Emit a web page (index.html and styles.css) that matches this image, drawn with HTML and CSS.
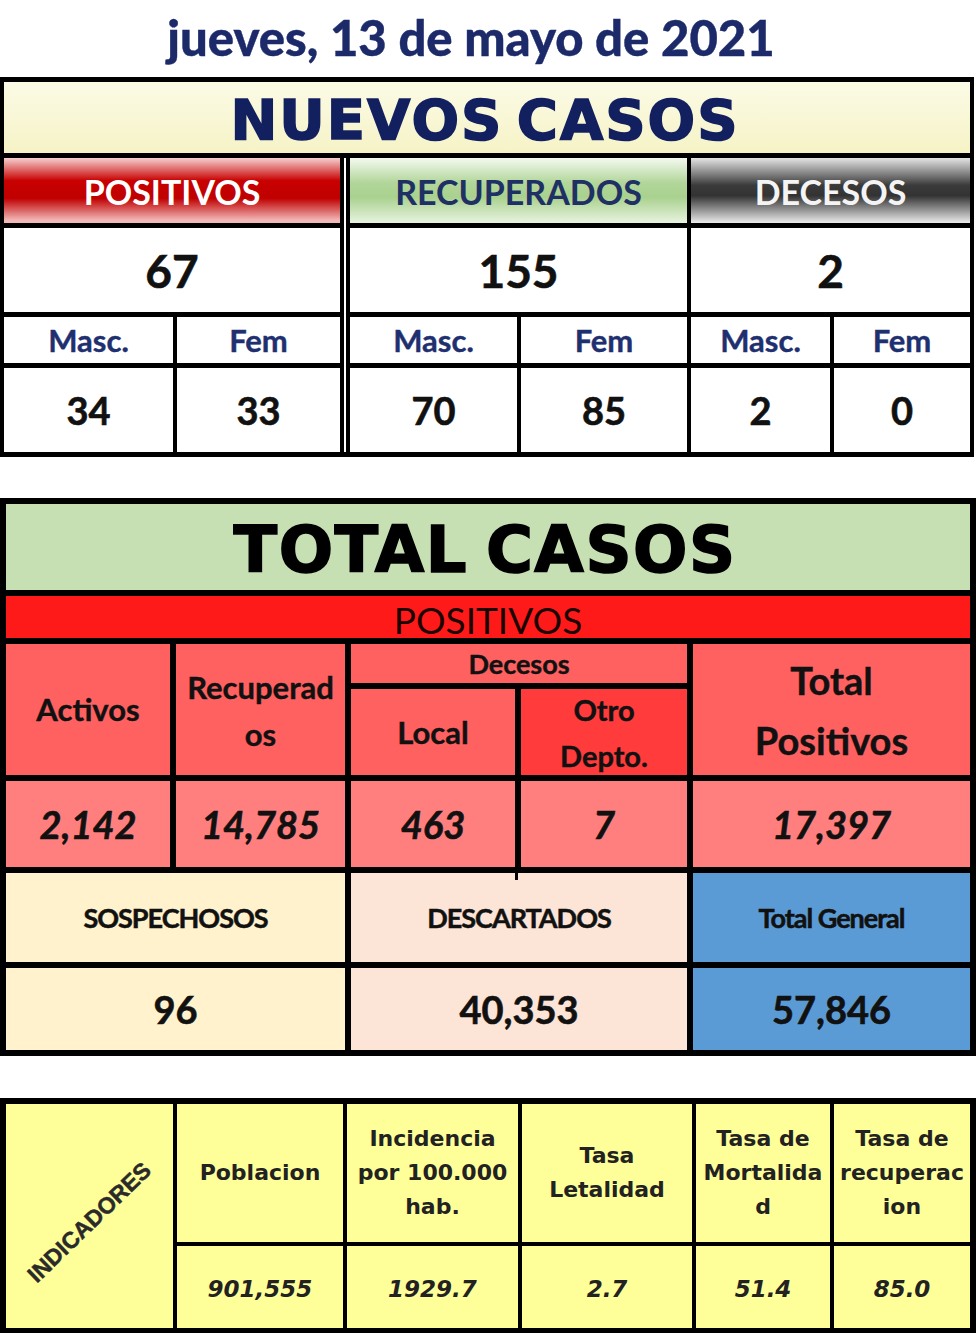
FILE: index.html
```html
<!DOCTYPE html>
<html lang="es">
<head>
<meta charset="utf-8">
<title>Reporte diario COVID-19</title>
<link rel="stylesheet" href="styles.css">
</head>
<body>
<h1 class="fecha">jueves, 13 de mayo de 2021</h1>

<section class="nuevos">
  <div class="n-title">NUEVOS CASOS</div>
  <div class="n-head pos">POSITIVOS</div>
  <div class="sep"></div>
  <div class="n-head rec">RECUPERADOS</div>
  <div class="n-head dec">DECESOS</div>
  <div class="n-big">67</div>
  <div class="n-big">155</div>
  <div class="n-big">2</div>
  <div class="n-sub">Masc.</div>
  <div class="n-sub">Fem</div>
  <div class="n-sub">Masc.</div>
  <div class="n-sub">Fem</div>
  <div class="n-sub">Masc.</div>
  <div class="n-sub">Fem</div>
  <div class="n-val">34</div>
  <div class="n-val">33</div>
  <div class="n-val">70</div>
  <div class="n-val">85</div>
  <div class="n-val">2</div>
  <div class="n-val">0</div>
</section>

<section class="total">
  <div class="t-title">TOTAL CASOS</div>
  <div class="t-band">POSITIVOS</div>
  <div class="t-h t-activos">Activos</div>
  <div class="t-h t-recup">Recuperad<br>os</div>
  <div class="t-h t-dec">Decesos</div>
  <div class="t-h t-local">Local</div>
  <div class="t-h t-otro">Otro<br>Depto.</div>
  <div class="t-h t-tot">Total<br>Positivos</div>
  <div class="t-v">2,142</div>
  <div class="t-v">14,785</div>
  <div class="t-v">463</div>
  <div class="t-v">7</div>
  <div class="t-v">17,397</div>
  <div class="t-s sosp">SOSPECHOSOS</div>
  <div class="t-s desc">DESCARTADOS</div>
  <div class="t-s gen">Total General</div>
  <div class="t-n sosp">96</div>
  <div class="t-n desc">40,353</div>
  <div class="t-n gen">57,846</div>
</section>

<section class="ind">
  <div class="i-label"><span>INDICADORES</span></div>
  <div class="i-h">Poblacion</div>
  <div class="i-h">Incidencia<br>por 100.000<br>hab.</div>
  <div class="i-h">Tasa<br>Letalidad</div>
  <div class="i-h">Tasa de<br>Mortalida<br>d</div>
  <div class="i-h">Tasa de<br>recuperac<br>ion</div>
  <div class="i-v">901,555</div>
  <div class="i-v">1929.7</div>
  <div class="i-v">2.7</div>
  <div class="i-v">51.4</div>
  <div class="i-v">85.0</div>
</section>
</body>
</html>
```

FILE: styles.css
```css
* { box-sizing: border-box; margin: 0; padding: 0; }
html, body { background: #fff; }
body {
  width: 980px;
  height: 1333px;
  overflow: hidden;
  font-family: Lato, "Noto Sans", sans-serif;
  color: #111;
}

.fecha {
  height: 77px;
  display: flex;
  align-items: center;
  justify-content: center;
  padding: 0 38px 2px 0;
  font: 900 49px/1 Lato, sans-serif;
  color: #1c2a6a;
  -webkit-text-stroke: 0.4px #1c2a6a;
}

/* ---------- NUEVOS CASOS ---------- */
.nuevos {
  display: grid;
  width: fit-content;
  background: #000;
  padding: 5px 4px;
  column-gap: 4px;
  row-gap: 5px;
  grid-template-columns: 169px 163px 2px 167px 166px 139px 136px;
  grid-template-rows: 71px 65px 84px 46px 84px;
}
.nuevos > div {
  display: flex;
  align-items: center;
  justify-content: center;
  background: #fff;
  font-weight: 700;
}
.nuevos .n-title {
  grid-column: 1 / -1;
  background: linear-gradient(#fbfbe6, #f6f3c6);
  font: 700 56px/1 "DejaVu Sans", sans-serif;
  letter-spacing: 2px;
  word-spacing: -8px;
  color: #13205f;
  -webkit-text-stroke: 1.6px #13205f;
  padding: 4px 4px 0 0;
}
.nuevos .sep { grid-column: 3; grid-row: 2 / 6; }
.nuevos .n-head { grid-column: span 2; font-size: 34px; padding-top: 2px; }
.nuevos .pos {
  background: linear-gradient(#f6d0d0 0%, #c80000 35%, #c00000 62%, #f2b8b8 96%);
  color: #fff;
}
.nuevos .rec {
  background: linear-gradient(#f4f9f0 0%, #b2d69a 38%, #a9d18e 60%, #e8f3e0 100%);
  color: #1f3064;
}
.nuevos .dec {
  background: linear-gradient(#e4e4e4 0%, #3a3a3a 42%, #333 58%, #ececec 100%);
  color: #f4f4f4;
}
.nuevos .n-big { grid-column: span 2; font-size: 46px; -webkit-text-stroke: 0.6px #111; }
.nuevos .n-sub { font-size: 31px; color: #1f3070; -webkit-text-stroke: 0.4px #1f3070; }
.nuevos .n-val { font-size: 38px; -webkit-text-stroke: 0.6px #111; }

/* ---------- TOTAL CASOS ---------- */
.total {
  display: grid;
  width: fit-content;
  margin-top: 41px;
  background: #000;
  padding: 6px;
  gap: 6px;
  grid-template-columns: 164px 169px 164px 166px 277px;
  grid-template-rows: 86px 42px 39px 86px 86px 89px 82px;
}
.total > div {
  display: flex;
  align-items: center;
  justify-content: center;
  text-align: center;
  font-weight: 700;
}
.total .t-title {
  grid-column: 1 / -1;
  background: #c6e0b4;
  font: 700 64px/1 "DejaVu Sans", sans-serif;
  letter-spacing: 1.5px;
  word-spacing: -6px;
  color: #000;
  -webkit-text-stroke: 1.6px #000;
  padding: 6px 6px 0 0;
}
.total .t-band {
  grid-column: 1 / -1;
  background: #ff1a1a;
  font-weight: 400;
  font-size: 37px;
  color: #1a0000;
  padding-top: 5px;
}
.total .t-h { background: #ff6060; line-height: 47px; font-size: 31px; -webkit-text-stroke: 0.4px #111; }
.total .t-activos { grid-column: 1; grid-row: 3 / 5; }
.total .t-recup { grid-column: 2; grid-row: 3 / 5; padding-top: 2px; }
.total .t-dec { grid-column: 3 / 5; grid-row: 3; font-size: 27px; }
.total .t-local { grid-column: 3; grid-row: 4; }
.total .t-otro {
  grid-column: 4; grid-row: 4;
  background: #ff3b3b;
  font-size: 29px;
  line-height: 46px;
  overflow: hidden;
  padding-top: 2px;
}
.total .t-tot { grid-column: 5; grid-row: 3 / 5; font-size: 38px; line-height: 60px; }
.total .t-v { background: #ff7f7f; font-size: 38px; font-style: italic; -webkit-text-stroke: 0.6px #111; }
.total .t-s { font-size: 27px; letter-spacing: -1px; -webkit-text-stroke: 0.5px #111; }
.total .t-n { font-size: 38px; -webkit-text-stroke: 0.6px #111; }
.total .sosp { grid-column: span 2; background: #fff2cc; }
.total .desc { grid-column: span 2; background: #fce4d6; }
.total .gen { background: #5b9bd5; }
.total .t-s.desc { position: relative; }
.total .t-s.desc::before {
  content: "";
  position: absolute;
  top: 0;
  left: 164px;
  width: 3px;
  height: 7px;
  background: #000;
}

/* ---------- INDICADORES ---------- */
.ind {
  display: grid;
  width: fit-content;
  margin-top: 42px;
  background: #000;
  padding: 6px 6px 5px;
  gap: 4px;
  grid-template-columns: 167px 166px 171px 170px 134px 136px;
  grid-template-rows: 138px 82px;
  font-family: "DejaVu Sans", sans-serif;
  font-weight: 700;
  color: #222;
}
.ind > div {
  display: flex;
  align-items: center;
  justify-content: center;
  text-align: center;
  background: #ffff99;
}
.ind .i-label { grid-row: 1 / 3; padding-top: 12px; }
.ind .i-label span {
  display: block;
  transform: rotate(-44deg);
  font: 700 23px/1 "Liberation Sans", sans-serif;
  color: #2a2a2a;
  -webkit-text-stroke: 0.5px #2a2a2a;
}
.ind .i-h { font-size: 22px; line-height: 34px; }
.ind .i-v { font-size: 23px; font-style: italic; padding-top: 4px; }
```
